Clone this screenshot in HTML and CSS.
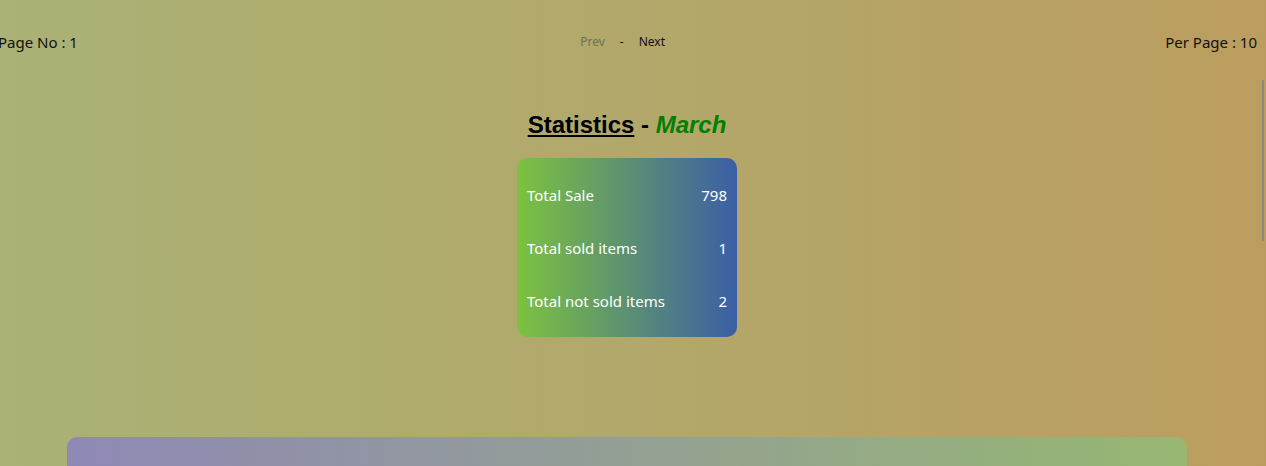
FILE: index.html
```html
<!DOCTYPE html>
<html lang="en">
<head>
<meta charset="utf-8">
<title>Statistics</title>
<link rel="stylesheet" href="styles.css">
</head>
<body>
<div class="page">
  <header class="pager">
    <div class="page-no">Page No : 1</div>
    <div class="nav">
      <span class="prev">Prev</span>
      <span class="sep">-</span>
      <span class="next">Next</span>
    </div>
    <div class="per-page">Per Page : 10</div>
  </header>

  <section class="stats">
    <h2 class="stats-title"><span class="word">Statistics</span> - <em class="month">March</em></h2>
    <div class="stats-card">
      <div class="stats-row"><span>Total Sale</span><span>798</span></div>
      <div class="stats-row"><span>Total sold items</span><span>1</span></div>
      <div class="stats-row"><span>Total not sold items</span><span>2</span></div>
    </div>
  </section>

  <section class="chart-panel"></section>
</div>
<div class="scroll-thumb"></div>
</body>
</html>
```

FILE: styles.css
```css
html, body {
  margin: 0;
  height: 100%;
  overflow: hidden;
}

body {
  background: linear-gradient(to right, #aab276, #bb9d5f);
  font-family: "Noto Sans", "Open Sans", sans-serif;
  color: #111;
}

.page {
  display: flex;
  flex-direction: column;
}

.pager {
  display: flex;
  justify-content: space-between;
  align-items: center;
  height: 83px;
  padding: 0 9px 0 0;
  margin-left: -2px;
  font-size: 15px;
}

.nav {
  display: flex;
  gap: 15px;
  font-size: 12px;
  margin-left: 2px;
}

.prev { color: #6f7251; }
.sep, .next { color: #111; }

.stats {
  display: flex;
  flex-direction: column;
  align-items: center;
  padding-right: 12px;
}

.stats-title {
  margin: 28px 0 19px;
  font-family: "Liberation Sans", Arial, sans-serif;
  font-size: 24px;
  font-weight: bold;
  line-height: 28px;
  color: #000;
}

.stats-title .word {
  text-decoration: underline;
}

.stats-title .month {
  color: #008000;
}

.stats-card {
  width: 220px;
  box-sizing: border-box;
  padding: 10px;
  border-radius: 10px;
  background: linear-gradient(to right, #7dc23f, #3a5fa6);
  color: #fff;
  font-size: 15px;
}

.stats-row {
  display: flex;
  justify-content: space-between;
  height: 53px;
  align-items: center;
}

.chart-panel {
  margin: 100px 79px 0 67px;
  height: 80px;
  border-radius: 10px;
  background: linear-gradient(to right, #8f88b6, #97b771);
}

.scroll-thumb {
  position: fixed;
  top: 80px;
  right: 2px;
  width: 2px;
  height: 161px;
  background: #8b8a7f;
  border-radius: 1px;
}
```
